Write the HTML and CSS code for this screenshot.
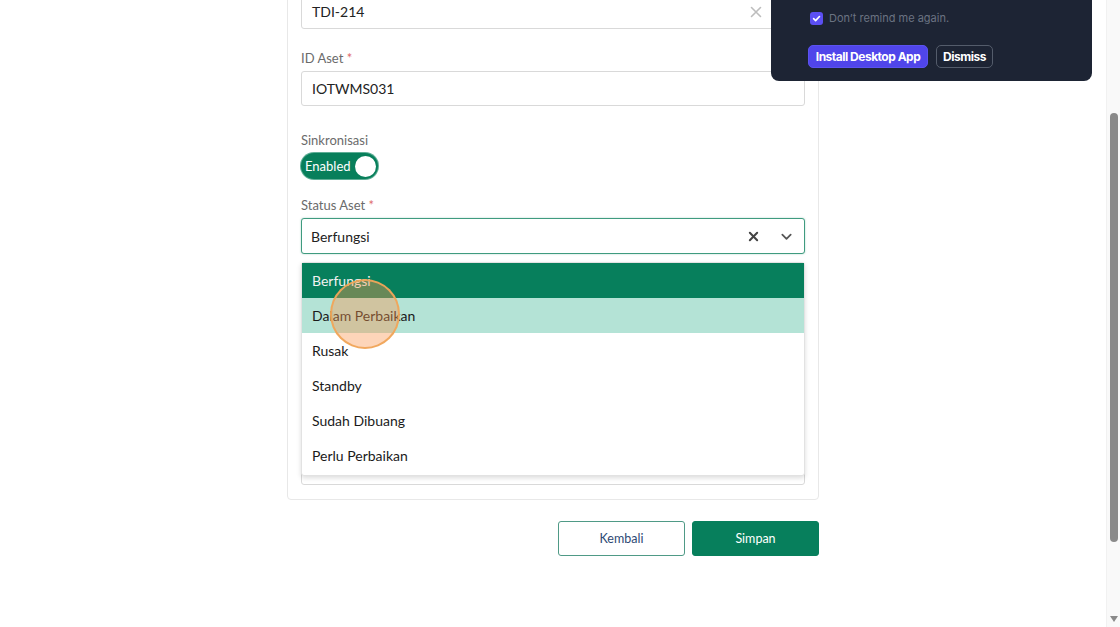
FILE: index.html
```html
<!DOCTYPE html>
<html lang="id">
<head>
<meta charset="utf-8">
<title>Edit Aset</title>
<link rel="stylesheet" href="styles.css">
</head>
<body>
<div class="layout">
  <main class="content">
    <section class="card">
      <div class="field">
        <div class="input">
          <span class="value">TDI-214</span>
          <svg class="clear" width="12" height="12" viewBox="0 0 12 12"><path d="M1.5 1.5 L10.5 10.5 M10.5 1.5 L1.5 10.5" stroke="#bdbdbd" stroke-width="1.6" stroke-linecap="round"/></svg>
        </div>
      </div>
      <div class="field field-id">
        <label class="label">ID Aset <span class="req">*</span></label>
        <div class="input"><span class="value">IOTWMS031</span></div>
      </div>
      <div class="field field-sync">
        <label class="label">Sinkronisasi</label>
        <div class="toggle"><span class="toggle-text">Enabled</span><span class="knob"></span></div>
      </div>
      <div class="field field-status">
        <label class="label">Status Aset <span class="req">*</span></label>
        <div class="select-wrap">
          <div class="input select">
            <span class="value">Berfungsi</span>
            <span class="icons">
              <svg class="ico-x" width="11" height="11" viewBox="0 0 12 12"><path d="M2 2 L10 10 M10 2 L2 10" stroke="#444" stroke-width="2.2" stroke-linecap="round"/></svg>
              <svg class="ico-chev" width="13" height="13" viewBox="0 0 14 14"><path d="M2.5 5 L7 9.5 L11.5 5" fill="none" stroke="#555" stroke-width="1.9" stroke-linecap="round" stroke-linejoin="round"/></svg>
            </span>
          </div>
          <ul class="menu">
            <li class="opt opt-selected">Berfungsi</li>
            <li class="opt opt-hover">Dalam Perbaikan</li>
            <li class="opt">Rusak</li>
            <li class="opt">Standby</li>
            <li class="opt">Sudah Dibuang</li>
            <li class="opt">Perlu Perbaikan</li>
          </ul>
        </div>
      </div>
      <div class="field">
        <label class="label">Keterangan</label>
        <div class="input textarea"></div>
      </div>
    </section>
    <div class="actions">
      <button class="btn btn-outline">Kembali</button>
      <button class="btn btn-primary">Simpan</button>
    </div>
  </main>
  <aside class="scrollbar">
    <div class="track"><div class="thumb"></div></div>
    <div class="arrow"></div>
  </aside>
</div>

<div class="popup">
  <div class="remind">
    <span class="checkbox"><svg width="9" height="9" viewBox="0 0 10 10"><path d="M1.8 5.2 L4 7.3 L8.3 2.8" fill="none" stroke="#fff" stroke-width="1.8" stroke-linecap="round" stroke-linejoin="round"/></svg></span>
    <span class="remind-text">Don’t remind me again.</span>
  </div>
  <div class="popup-actions">
    <button class="pbtn pbtn-primary">Install Desktop App</button>
    <button class="pbtn pbtn-ghost">Dismiss</button>
  </div>
</div>

<div class="cursor"></div>
</body>
</html>
```

FILE: styles.css
```css
* { box-sizing: border-box; }

html, body {
  margin: 0;
  padding: 0;
  background: #ffffff;
  overflow: hidden;
  height: 627px;
}

body {
  font-family: "Lato", "Liberation Sans", sans-serif;
  color: #1f1f1f;
}

.layout {
  display: flex;
  width: 1120px;
  height: 627px;
}

.content {
  flex: 1;
  display: flex;
  flex-direction: column;
  align-items: center;
}

.card {
  width: 532px;
  margin-top: -21px;
  border: 1px solid #e8e8e8;
  border-radius: 4px;
  padding: 14px 13px 14px 13px;
  display: flex;
  flex-direction: column;
}

.field {
  display: flex;
  flex-direction: column;
  margin-top: 20px;
}
.field:first-child { margin-top: 0; }
.field-id { margin-top: 21px; }
.field-sync { margin-top: 26px; }
.field-status { margin-top: 18px; }

.label {
  font-size: 13px;
  line-height: 16px;
  color: #6b6b6b;
  margin-bottom: 5px;
}
.req { color: #e06b6b; }

.input {
  height: 35px;
  border: 1px solid #d9d9d9;
  border-radius: 3px;
  display: flex;
  align-items: center;
  padding: 0 10px;
  background: #fff;
  font-size: 14px;
  color: #222;
}
.input .value { flex: 1; }

.clear {
  margin-right: 32px;
}

.toggle {
  width: 77px;
  height: 26px;
  border-radius: 13px;
  background: #087f5b;
  box-shadow: 0 0 0 1px #5fae96;
  display: flex;
  align-items: center;
  justify-content: space-between;
  padding: 0 2px 0 4px;
}
.toggle-text {
  color: #fff;
  font-size: 13px;
}
.knob {
  width: 21px;
  height: 21px;
  border-radius: 50%;
  background: #fff;
}

.select-wrap { position: relative; }

.select {
  height: 36px;
  border: 1.5px solid #3f9b7f;
  box-shadow: 0 0 2px rgba(8,127,91,0.35);
  padding: 0 11px 0 9px;
}
.icons {
  display: flex;
  align-items: center;
  gap: 21px;
}

.menu {
  position: absolute;
  left: 0;
  right: 0;
  top: 44px;
  margin: 0;
  padding: 0 0 2px 0;
  list-style: none;
  background: #fff;
  border: 1px solid #e2e2e2;
  border-radius: 3px;
  box-shadow: 0 2px 5px rgba(0,0,0,0.14);
  z-index: 5;
}
.opt {
  height: 35px;
  display: flex;
  align-items: center;
  padding: 0 10px;
  font-size: 14px;
  color: #1a1a1a;
}
.opt-selected { background: #077f5c; color: #f2f2f2; }
.opt-hover { background: #b4e3d6; }

.textarea { height: 190px; }

.actions {
  width: 532px;
  margin-top: 21px;
  display: flex;
  justify-content: flex-end;
  gap: 7px;
}
.btn {
  width: 127px;
  height: 35px;
  border-radius: 3px;
  font-family: "Lato", "Liberation Sans", sans-serif;
  font-size: 12.5px;
  cursor: pointer;
}
.btn-outline {
  background: #fff;
  border: 1px solid #4f9a86;
  color: #2e4a74;
}
.btn-primary {
  background: #077f5c;
  border: 1px solid #077f5c;
  color: #fff;
}

.scrollbar {
  width: 14px;
  background: #f9f9f9;
  border-left: 1px solid #f1f1f1;
  display: flex;
  flex-direction: column;
  align-items: center;
  padding-top: 113px;
}
.track { flex: 1; display: flex; flex-direction: column; }
.thumb {
  width: 8px;
  height: 429px;
  border-radius: 4px;
  background: #8a8a8a;
}
.arrow {
  width: 0;
  height: 0;
  border-left: 4.5px solid transparent;
  border-right: 4.5px solid transparent;
  border-top: 6px solid #8a8a8a;
  margin-bottom: 5px;
}

.popup {
  position: fixed;
  top: 0;
  left: 771px;
  width: 321px;
  height: 81px;
  background: #1d2434;
  border-radius: 0 0 8px 8px;
  padding: 11px 0 0 37px;
  font-family: "Inter", "Liberation Sans", sans-serif;
  z-index: 10;
}
.remind {
  display: flex;
  align-items: center;
  gap: 6px;
  padding-left: 2px;
}
.checkbox {
  width: 13px;
  height: 13px;
  border-radius: 3px;
  background: #5b4ff3;
  display: flex;
  align-items: center;
  justify-content: center;
}
.remind-text {
  font-size: 11px;
  color: #6b7382;
}
.popup-actions {
  display: flex;
  gap: 8px;
  margin-top: 20px;
}
.pbtn {
  height: 23px;
  border-radius: 5px;
  font-family: "Inter", "Liberation Sans", sans-serif;
  font-size: 12px;
  font-weight: 700;
  letter-spacing: -0.5px;
  white-space: nowrap;
  color: #fff;
  padding: 0 4px;
}
.pbtn-primary {
  width: 120px;
  background: #5045ea;
  border: 1px solid #5b52f0;
}
.pbtn-ghost {
  width: 57px;
  background: transparent;
  border: 1px solid #545c6b;
}

.cursor {
  position: fixed;
  left: 330px;
  top: 279px;
  width: 70px;
  height: 70px;
  border-radius: 50%;
  background: rgba(250, 150, 80, 0.4);
  border: 2px solid rgba(240, 165, 90, 0.95);
  z-index: 20;
  pointer-events: none;
}
```
